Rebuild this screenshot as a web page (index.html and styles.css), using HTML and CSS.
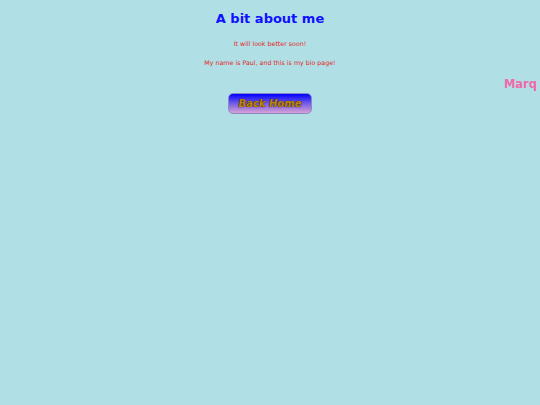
FILE: index.html
```html
<!DOCTYPE html>
<html>
<head>
<meta charset="utf-8">
<title>A bit about me</title>
<link rel="stylesheet" href="styles.css">
</head>
<body>
<div class="page">
  <h1 class="title">A bit about me</h1>
  <p class="note">It will look better soon!</p>
  <p class="note">My name is Paul, and this is my bio page!</p>
  <div class="marquee"><span class="marq-text">Marq</span></div>
  <div class="actions"><a class="btn" href="#">Back Home</a></div>
</div>
</body>
</html>
```
FILE: styles.css
```css
html, body {
  margin: 0;
  padding: 0;
}
body {
  background: #b0e0e6;
  width: 540px;
  height: 405px;
  overflow: hidden;
  font-family: "Comic Sans MS", "DejaVu Sans", sans-serif;
}
.page {
  display: flex;
  flex-direction: column;
  align-items: center;
  padding-top: 10px;
}
.title {
  margin: 0;
  font-size: 13px;
  font-weight: bold;
  color: #1010ff;
  line-height: 17px;
}
.note {
  margin: 0;
  color: #e02424;
  font-size: 6.3px;
  line-height: 8px;
}
.title + .note {
  margin-top: 13px;
}
.note + .note {
  margin-top: 11px;
}
.marquee {
  align-self: stretch;
  display: flex;
  justify-content: flex-end;
  margin-top: 9px;
  height: 16px;
  padding-right: 3px;
}
.marq-text {
  white-space: nowrap;
  color: #f06aaa;
  font-weight: bold;
  font-size: 11.5px;
  line-height: 16px;
}
.actions {
  margin-top: 1px;
}
.btn {
  display: flex;
  align-items: center;
  justify-content: center;
  width: 82px;
  height: 19px;
  box-sizing: content-box;
  border: 1px solid #8a8ac8;
  border-radius: 5px;
  background: linear-gradient(to bottom, #0000ff 0%, #6a55ea 45%, #d8a2d4 100%);
  color: #c08512;
  font-family: "DejaVu Sans", sans-serif;
  font-style: oblique;
  font-weight: bold;
  font-size: 10px;
  text-decoration: none;
  text-shadow: 0 0 1px #2a1e00, 0 0 1px #2a1e00;
}
```
